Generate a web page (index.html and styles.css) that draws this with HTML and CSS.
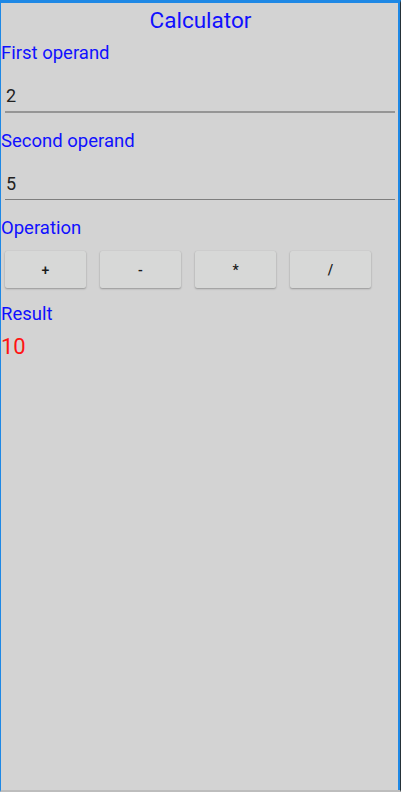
FILE: index.html
```html
<!DOCTYPE html>
<html>
<head>
<meta charset="utf-8">
<link rel="stylesheet" href="styles.css">
</head>
<body>
<div class="frame">
  <div class="title">Calculator</div>
  <div class="label label-first">First operand</div>
  <div class="field field-focus"><span class="value">2</span></div>
  <div class="label">Second operand</div>
  <div class="field"><span class="value">5</span></div>
  <div class="label">Operation</div>
  <div class="ops">
    <button class="op">+</button>
    <button class="op">-</button>
    <button class="op">*</button>
    <button class="op">/</button>
  </div>
  <div class="label">Result</div>
  <div class="result">10</div>
</div>
</body>
</html>
```
FILE: styles.css
```css
html, body {
  margin: 0;
  padding: 0;
  height: 100%;
}
body {
  background: #d3d3d3;
  font-family: Roboto, "Noto Sans", sans-serif;
}
.frame {
  box-sizing: border-box;
  height: 792px;
  width: 401px;
  border-top: 3px solid #1e88e5;
  border-left: 1px solid #1e88e5;
  border-right: 1px solid #263238;
  border-bottom: 2px solid #bdbdbd;
  box-shadow: inset -2px 0 0 #1e88e5;
  background: #d3d3d3;
  display: flex;
  flex-direction: column;
}
.title {
  text-align: center;
  color: #1010ff;
  font-size: 22.5px;
  line-height: 30px;
  margin-top: 2px;
}
.label {
  color: #1010ff;
  font-size: 18.5px;
  line-height: 24px;
  margin-top: 1px;
  margin-bottom: -1px;
}
.label-first {
  margin-top: 6px;
}
.field {
  margin: 0 5px 15px 4px;
  height: 47px;
  display: flex;
  align-items: flex-end;
  border-bottom: 1px solid #7e7e7e;
}
.field-focus {
  border-bottom: 2px solid #959595;
}
.value {
  color: #222;
  font-size: 18px;
  line-height: 26px;
  padding-left: 1px;
  margin-bottom: 2px;
}
.ops {
  display: flex;
  gap: 14px;
  padding-left: 4px;
  margin-top: 12px;
  margin-bottom: 13px;
}
.op {
  width: 81px;
  height: 37px;
  border: none;
  border-radius: 2px;
  background: #d7d8d7;
  box-shadow: 0 1px 2px rgba(0,0,0,0.28), 0 0 1px rgba(0,0,0,0.12);
  font-family: Roboto, sans-serif;
  font-size: 14px;
  font-weight: 500;
  color: #1a1a1a;
  padding: 0;
}
.result {
  color: #ff1414;
  font-size: 22px;
  line-height: 30px;
  margin-top: 7px;
}
```
